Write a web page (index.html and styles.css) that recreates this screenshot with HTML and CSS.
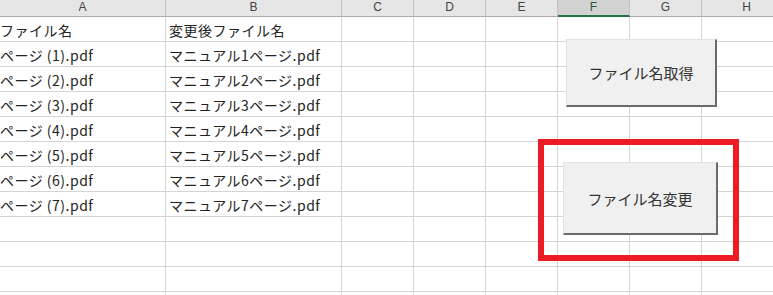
FILE: index.html
```html
<!DOCTYPE html>
<html lang="ja">
<head>
    <meta charset="UTF-8">
    <meta name="viewport" content="width=device-width, initial-scale=1.0">
    <title>ファイル名変更</title>
    <link rel="stylesheet" href="styles.css">
</head>
<body>
    <div class="sheet">
        <div class="grid">
            <div class="col-head">A</div>
            <div class="col-head">B</div>
            <div class="col-head">C</div>
            <div class="col-head">D</div>
            <div class="col-head">E</div>
            <div class="col-head selected">F</div>
            <div class="col-head">G</div>
            <div class="col-head">H</div>
        </div>
        <div class="grid" id="rows"></div>

        <button class="shape-btn btn-get">ファイル名取得</button>
        <div class="highlight"></div>
        <button class="shape-btn btn-rename">ファイル名変更</button>
    </div>

    <script>
    const rows = [['ファイル名', '変更後ファイル名']];
    for (let i = 1; i <= 7; i++) rows.push([`ページ (${i}).pdf`, `マニュアル${i}ページ.pdf`]);
    while (rows.length < 12) rows.push(['', '']);

    const body = document.getElementById('rows');
    rows.forEach(r => {
        for (let c = 0; c < 8; c++) {
            const cell = document.createElement('div');
            cell.className = c === 0 ? 'cell first' : 'cell';
            cell.textContent = r[c] || '';
            body.appendChild(cell);
        }
    });
    </script>
</body>
</html>
```

FILE: styles.css
```css
html, body {
    margin: 0;
    padding: 0;
    background-color: #fff;
    overflow: hidden;
}
.sheet {
    position: relative;
    width: 773px;
    height: 295px;
    overflow: hidden;
}
.grid {
    display: grid;
    grid-template-columns: 166px 176px repeat(5, 72px) 90px;
}
.col-head {
    box-sizing: border-box;
    height: 17px;
    background-color: #e6e6e6;
    border-right: 1px solid #c3c3c3;
    border-bottom: 1px solid #ababab;
    color: #444;
    font-family: "Liberation Sans", Arial, sans-serif;
    font-size: 12px;
    line-height: 14px;
    text-align: center;
}
.col-head.selected {
    background-color: #d2d2d2;
    border-bottom: 2px solid #217346;
    color: #1e5c3a;
}
.cell {
    box-sizing: border-box;
    height: 25px;
    border-right: 1px solid #d4d4d4;
    border-bottom: 1px solid #d4d4d4;
    padding: 3px 0 0 3px;
    font-family: "Noto Sans CJK JP", "Noto Sans", sans-serif;
    font-size: 14px;
    line-height: 20px;
    letter-spacing: 0.5px;
    color: #222;
    white-space: nowrap;
    overflow: hidden;
}
.cell.first {
    padding-left: 0;
}
.shape-btn {
    position: absolute;
    display: flex;
    align-items: center;
    justify-content: center;
    box-sizing: border-box;
    margin: 0;
    padding: 0;
    background-color: #f0f0f0;
    border-top: 1px solid #e2e2e2;
    border-left: 1px solid #e2e2e2;
    border-right: 2px solid #6b6b6b;
    border-bottom: 2px solid #6b6b6b;
    font-family: "Noto Sans CJK JP", "Noto Sans", sans-serif;
    font-size: 15px;
    color: #333;
}
.btn-get {
    left: 566px;
    top: 39px;
    width: 151px;
    height: 68px;
}
.btn-rename {
    left: 563px;
    top: 162px;
    width: 155px;
    height: 73px;
}
.highlight {
    position: absolute;
    left: 538px;
    top: 139px;
    width: 201px;
    height: 122px;
    box-sizing: border-box;
    border: 6px solid #ed1c24;
}
```
